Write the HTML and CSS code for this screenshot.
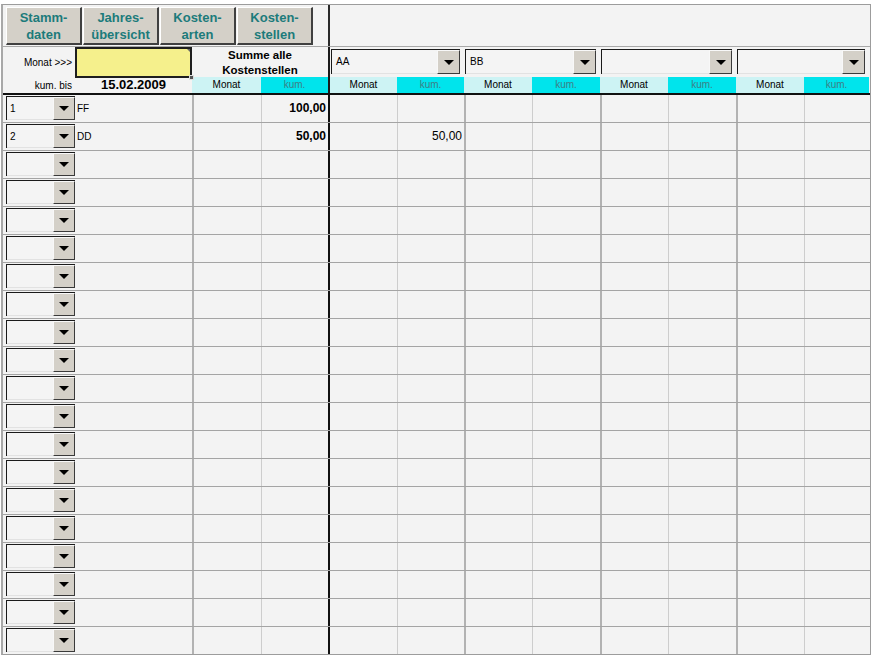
FILE: index.html
```html
<!DOCTYPE html>
<html lang="de">
<head>
<meta charset="utf-8">
<title>Kostenstellen</title>
<link rel="stylesheet" href="styles.css">
</head>
<body>
<div class="sheet">
  <div class="hrow toprow">
    <div class="toolbar">
      <button class="nav">Stamm-<br>daten</button>
      <button class="nav">Jahres-<br>übersicht</button>
      <button class="nav">Kosten-<br>arten</button>
      <button class="nav">Kosten-<br>stellen</button>
    </div>
    <div class="topright"></div>
  </div>

  <div class="hrow monatrow">
    <div class="lbl">Monat &gt;&gt;&gt;</div>
    <div class="input"><span class="handle"></span><span class="corner"></span></div>
    <div class="summe">Summe alle<br>Kostenstellen</div>
    <div class="grp first"><div class="combo big"><span class="val">AA</span><span class="drop"></span></div></div>
    <div class="grp"><div class="combo big"><span class="val">BB</span><span class="drop"></span></div></div>
    <div class="grp"><div class="combo big"><span class="val"></span><span class="drop"></span></div></div>
    <div class="grp"><div class="combo big"><span class="val"></span><span class="drop"></span></div></div>
  </div>

  <div class="hrow kumrow">
    <div class="lbl">kum. bis</div>
    <div class="date">15.02.2009</div>
    <div class="mon">Monat</div><div class="kum">kum.</div>
    <div class="mon sep">Monat</div><div class="kum">kum.</div>
    <div class="mon">Monat</div><div class="kum">kum.</div>
    <div class="mon">Monat</div><div class="kum">kum.</div>
    <div class="mon">Monat</div><div class="kum">kum.</div>
  </div>

  <div class="data">
    <div class="row"><div class="sel"><div class="combo"><span class="val">1</span><span class="drop"></span></div></div><div class="name">FF</div><div></div><div class="num b">100,00</div><div></div><div></div><div></div><div></div><div></div><div></div><div></div><div></div></div>
    <div class="row"><div class="sel"><div class="combo"><span class="val">2</span><span class="drop"></span></div></div><div class="name">DD</div><div></div><div class="num b">50,00</div><div></div><div class="num">50,00</div><div></div><div></div><div></div><div></div><div></div><div></div></div>
    <div class="row"><div class="sel"><div class="combo"><span class="val"></span><span class="drop"></span></div></div><div class="name"></div><div></div><div></div><div></div><div></div><div></div><div></div><div></div><div></div><div></div><div></div></div>
    <div class="row"><div class="sel"><div class="combo"><span class="val"></span><span class="drop"></span></div></div><div class="name"></div><div></div><div></div><div></div><div></div><div></div><div></div><div></div><div></div><div></div><div></div></div>
    <div class="row"><div class="sel"><div class="combo"><span class="val"></span><span class="drop"></span></div></div><div class="name"></div><div></div><div></div><div></div><div></div><div></div><div></div><div></div><div></div><div></div><div></div></div>
    <div class="row"><div class="sel"><div class="combo"><span class="val"></span><span class="drop"></span></div></div><div class="name"></div><div></div><div></div><div></div><div></div><div></div><div></div><div></div><div></div><div></div><div></div></div>
    <div class="row"><div class="sel"><div class="combo"><span class="val"></span><span class="drop"></span></div></div><div class="name"></div><div></div><div></div><div></div><div></div><div></div><div></div><div></div><div></div><div></div><div></div></div>
    <div class="row"><div class="sel"><div class="combo"><span class="val"></span><span class="drop"></span></div></div><div class="name"></div><div></div><div></div><div></div><div></div><div></div><div></div><div></div><div></div><div></div><div></div></div>
    <div class="row"><div class="sel"><div class="combo"><span class="val"></span><span class="drop"></span></div></div><div class="name"></div><div></div><div></div><div></div><div></div><div></div><div></div><div></div><div></div><div></div><div></div></div>
    <div class="row"><div class="sel"><div class="combo"><span class="val"></span><span class="drop"></span></div></div><div class="name"></div><div></div><div></div><div></div><div></div><div></div><div></div><div></div><div></div><div></div><div></div></div>
    <div class="row"><div class="sel"><div class="combo"><span class="val"></span><span class="drop"></span></div></div><div class="name"></div><div></div><div></div><div></div><div></div><div></div><div></div><div></div><div></div><div></div><div></div></div>
    <div class="row"><div class="sel"><div class="combo"><span class="val"></span><span class="drop"></span></div></div><div class="name"></div><div></div><div></div><div></div><div></div><div></div><div></div><div></div><div></div><div></div><div></div></div>
    <div class="row"><div class="sel"><div class="combo"><span class="val"></span><span class="drop"></span></div></div><div class="name"></div><div></div><div></div><div></div><div></div><div></div><div></div><div></div><div></div><div></div><div></div></div>
    <div class="row"><div class="sel"><div class="combo"><span class="val"></span><span class="drop"></span></div></div><div class="name"></div><div></div><div></div><div></div><div></div><div></div><div></div><div></div><div></div><div></div><div></div></div>
    <div class="row"><div class="sel"><div class="combo"><span class="val"></span><span class="drop"></span></div></div><div class="name"></div><div></div><div></div><div></div><div></div><div></div><div></div><div></div><div></div><div></div><div></div></div>
    <div class="row"><div class="sel"><div class="combo"><span class="val"></span><span class="drop"></span></div></div><div class="name"></div><div></div><div></div><div></div><div></div><div></div><div></div><div></div><div></div><div></div><div></div></div>
    <div class="row"><div class="sel"><div class="combo"><span class="val"></span><span class="drop"></span></div></div><div class="name"></div><div></div><div></div><div></div><div></div><div></div><div></div><div></div><div></div><div></div><div></div></div>
    <div class="row"><div class="sel"><div class="combo"><span class="val"></span><span class="drop"></span></div></div><div class="name"></div><div></div><div></div><div></div><div></div><div></div><div></div><div></div><div></div><div></div><div></div></div>
    <div class="row"><div class="sel"><div class="combo"><span class="val"></span><span class="drop"></span></div></div><div class="name"></div><div></div><div></div><div></div><div></div><div></div><div></div><div></div><div></div><div></div><div></div></div>
    <div class="row last"><div class="sel"><div class="combo"><span class="val"></span><span class="drop"></span></div></div><div class="name"></div><div></div><div></div><div></div><div></div><div></div><div></div><div></div><div></div><div></div><div></div></div>
  </div>
</div>
</body>
</html>
```
FILE: styles.css
```css
* { box-sizing: border-box; }
html, body { margin: 0; padding: 0; background: #ffffff; }
body {
  font-family: "Liberation Sans", Arial, sans-serif;
  font-size: 10px;
  color: #000;
}

.sheet {
  margin: 4px 0 0 1px;
  width: 870px;
  border: 1px solid #9c9c9c;
  border-left: 2px solid #a8a8a8;
  background: #f3f3f3;
}

.hrow, .row {
  display: grid;
  grid-template-columns: 72px 117px 69px 67px 69px 67px 68px 68px 68px 68px 68px 65px;
}

/* top row with navigation buttons */
.toprow { height: 42px; border-bottom: 1px solid #a8a8a8; }
.toolbar {
  grid-column: 1 / 5;
  display: flex;
  gap: 1px;
  padding: 2px 0 0 3px;
}
.nav {
  width: 76px;
  height: 38px;
  margin: 0;
  padding: 0;
  background: #d4d0c8;
  border-top: 1px solid #ffffff;
  border-left: 1px solid #ffffff;
  border-right: 2px solid #404040;
  border-bottom: 2px solid #404040;
  font-family: "Liberation Sans", Arial, sans-serif;
  font-weight: bold;
  font-size: 13px;
  line-height: 17px;
  color: #1c7b7b;
  text-align: center;
}
.topright { grid-column: 5 / 13; border-left: 2px solid #2a2a2a; }

/* Monat row */
.monatrow { height: 30px; }
.lbl {
  text-align: right;
  padding-right: 3px;
  align-self: center;
}
.input {
  position: relative;
  background: #f5f08c;
  border: 2px solid #1e1e1e;
}
.handle {
  position: absolute;
  right: -4px;
  bottom: -4px;
  width: 5px;
  height: 5px;
  background: #555;
  border: 1px solid #ddd;
}
.corner {
  position: absolute;
  right: 0;
  top: 0;
  width: 0;
  height: 0;
  border-top: 3px solid #666;
  border-left: 3px solid transparent;
}
.summe {
  grid-column: 3 / 5;
  text-align: center;
  font-weight: bold;
  font-size: 11.5px;
  line-height: 15px;
  padding-top: 1px;
}
.grp {
  grid-column: span 2;
  padding: 2px 4px 0 1px;
}
.grp.first { border-left: 2px solid #1a1a1a; }

/* combo boxes */
.combo {
  display: flex;
  height: 24px;
  border-top: 1px solid #1a1a1a;
  border-left: 1px solid #1a1a1a;
  background: #f4f4f4;
}
.combo.big { height: 25px; }
.combo .val {
  flex: 1;
  padding-left: 3px;
  line-height: 23px;
  font-size: 10px;
  border-bottom: 1px solid #e2e2e2;
}
.combo.big .val { padding-left: 4px; }
.combo .drop {
  width: 22px;
  background: #d4d0c8;
  border-top: 1px solid #f8f8f8;
  border-left: 1px solid #f8f8f8;
  border-right: 1px solid #3a3a3a;
  border-bottom: 1px solid #3a3a3a;
  display: flex;
  align-items: center;
  justify-content: center;
}
.combo.big .drop { width: 23px; }
.combo .drop::after {
  content: "";
  width: 0;
  height: 0;
  border-left: 5px solid transparent;
  border-right: 5px solid transparent;
  border-top: 5px solid #000;
}

/* kum row */
.kumrow { height: 18px; border-bottom: 2px solid #111; }
.kumrow .lbl { align-self: center; }
.date {
  text-align: center;
  font-weight: bold;
  font-size: 13px;
  line-height: 16px;
}
.mon, .kum {
  text-align: center;
  line-height: 16px;
}
.mon { background: #cdf3f4; }
.kum { background: #00e4ec; color: #3e7f86; }
.mon.sep { border-left: 2px solid #1a1a1a; }

/* data rows */
.row {
  height: 28px;
  border-bottom: 1px solid #a4a4a4;
}
.row.last { border-bottom: none; height: 27px; }
.row > :nth-child(3),
.row > :nth-child(7),
.row > :nth-child(9),
.row > :nth-child(11) { border-left: 2px solid #b2b2b2; }
.row > :nth-child(4),
.row > :nth-child(6),
.row > :nth-child(8),
.row > :nth-child(10),
.row > :nth-child(12) { border-left: 1px solid #cdcdcd; }
.row > :nth-child(5) { border-left: 2px solid #111; }

.sel { padding: 1px 0 0 3px; }
.sel .combo { width: 69px; }
.name {
  padding-left: 2px;
  line-height: 27px;
}
.num {
  text-align: right;
  padding-right: 2px;
  font-size: 12px;
  line-height: 27px;
}
.num.b { font-weight: bold; }
```
